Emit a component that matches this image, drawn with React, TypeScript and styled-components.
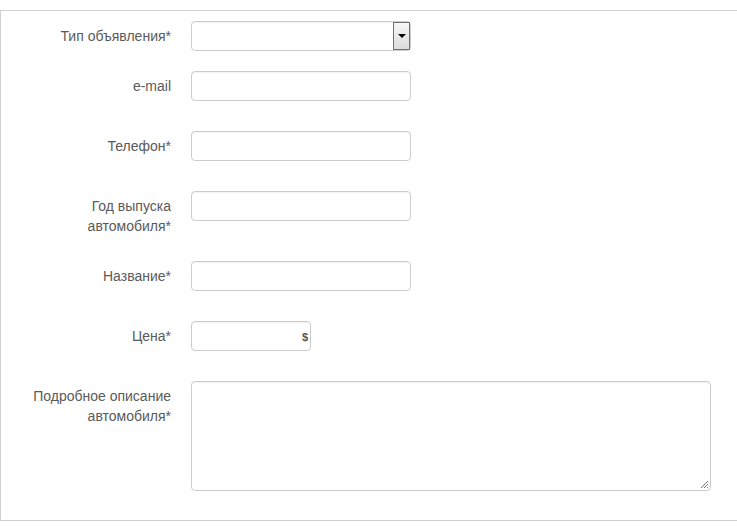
import React from "react";
import styled, { createGlobalStyle } from "styled-components";

const Global = createGlobalStyle`
  html, body { margin: 0; padding: 0; background: #fff; overflow: hidden; }
  body { font-family: "Liberation Sans", Arial, sans-serif; }
`;

const Panel = styled.form`
  margin-top: 10px;
  width: 760px;
  height: 511px;
  border: 1px solid #cfcfcf;
  border-right: none;
  padding: 10px 0 0 10px;
  box-sizing: border-box;
`;

const Row = styled.div<{ $mb: number }>`
  display: flex;
  align-items: flex-start;
  margin-bottom: ${(p) => p.$mb}px;
`;

const Label = styled.label`
  width: 160px;
  flex: none;
  text-align: right;
  padding-top: 5px;
  line-height: 20px;
  font-size: 14px;
  color: #5a5a5a;
  margin-right: 20px;
`;

const Field = styled.div<{ $w: number; $h?: number }>`
  position: relative;
  width: ${(p) => p.$w}px;
  height: ${(p) => p.$h ?? 30}px;
  border: 1px solid #ccc;
  border-radius: 4px;
  box-sizing: border-box;
  background: #fff;
  box-shadow: inset 0 1px 1px rgba(0, 0, 0, 0.05);
`;

const DropButton = styled.div`
  position: absolute;
  right: 0;
  top: 0;
  width: 17px;
  height: 28px;
  box-sizing: border-box;
  border: 1px solid #707070;
  background: linear-gradient(#f6f6f6, #dcdcdc);
  display: flex;
  align-items: center;
  justify-content: center;
`;

const Arrow = styled.div`
  width: 0;
  height: 0;
  border-left: 4px solid transparent;
  border-right: 4px solid transparent;
  border-top: 4px solid #000;
`;

const Currency = styled.span`
  position: absolute;
  right: 2px;
  top: 9px;
  font-size: 11px;
  font-weight: bold;
  color: #555;
  line-height: 12px;
`;

const Grip = styled.svg`
  position: absolute;
  right: 1px;
  bottom: 1px;
`;

type RowDef = { label: React.ReactNode; mb: number; kind: "select" | "text" | "price" | "area" };

const rows: RowDef[] = [
  { label: "Тип объявления*", mb: 20, kind: "select" },
  { label: "e-mail", mb: 30, kind: "text" },
  { label: "Телефон*", mb: 30, kind: "text" },
  { label: <>Год выпуска<br />автомобиля*</>, mb: 25, kind: "text" },
  { label: "Название*", mb: 30, kind: "text" },
  { label: "Цена*", mb: 30, kind: "price" },
  { label: <>Подробное описание<br />автомобиля*</>, mb: 0, kind: "area" },
];

function Control({ kind }: { kind: RowDef["kind"] }) {
  if (kind === "select")
    return (
      <Field $w={220}>
        <DropButton>
          <Arrow />
        </DropButton>
      </Field>
    );
  if (kind === "price")
    return (
      <Field $w={120}>
        <Currency>$</Currency>
      </Field>
    );
  if (kind === "area")
    return (
      <Field $w={520} $h={110}>
        <Grip width="10" height="10" viewBox="0 0 10 10">
          <path d="M9 2 L2 9 M9 5 L5 9 M9 8 L8 9" stroke="#777" strokeWidth="1" />
        </Grip>
      </Field>
    );
  return <Field $w={220} />;
}

export default function App() {
  return (
    <>
      <Global />
      <Panel>
        {rows.map((r, i) => (
          <Row key={i} $mb={r.mb}>
            <Label>{r.label}</Label>
            <Control kind={r.kind} />
          </Row>
        ))}
      </Panel>
    </>
  );
}
